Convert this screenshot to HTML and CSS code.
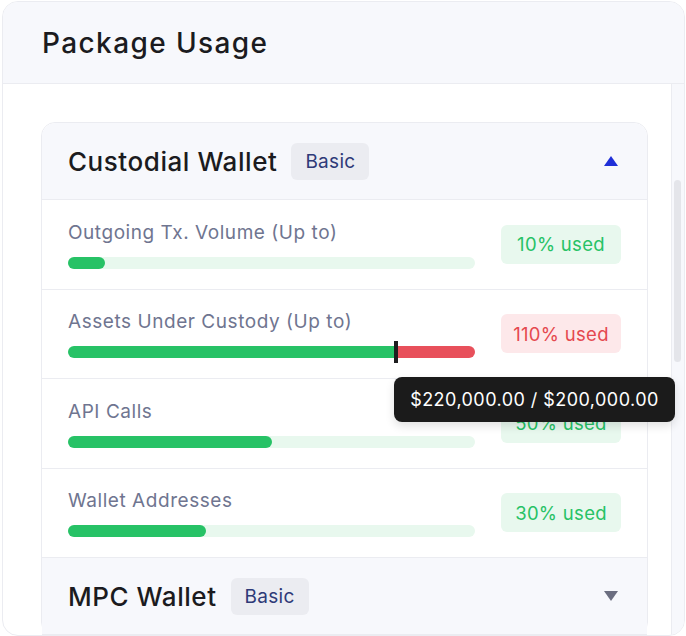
FILE: index.html
```html
<!DOCTYPE html>
<html lang="en">
<head>
<meta charset="utf-8">
<title>Package Usage</title>
<link rel="stylesheet" href="styles.css">
</head>
<body>
<div class="card">
  <div class="card-header">
    <h1 class="card-title">Package Usage</h1>
  </div>
  <div class="card-body">
    <div class="content">
      <div class="acc">
        <div class="acc-head">
          <span class="acc-title">Custodial Wallet</span>
          <span class="plan">Basic</span>
          <span class="caret caret-up"></span>
        </div>
        <div class="row">
          <div class="metric">
            <div class="label">Outgoing Tx. Volume (Up to)</div>
            <div class="bar"><div class="fill" style="width:9.1%"></div></div>
          </div>
          <span class="used">10% used</span>
        </div>
        <div class="row">
          <div class="metric">
            <div class="label">Assets Under Custody (Up to)</div>
            <div class="bar bar-over">
              <div class="fill fill-ok" style="width:326px"></div>
              <div class="marker"></div>
              <div class="fill-over"></div>
              <div class="tooltip">$220,000.00 / $200,000.00</div>
            </div>
          </div>
          <span class="used used-over">110% used</span>
        </div>
        <div class="row">
          <div class="metric">
            <div class="label">API Calls</div>
            <div class="bar"><div class="fill" style="width:50%"></div></div>
          </div>
          <span class="used">50% used</span>
        </div>
        <div class="row">
          <div class="metric">
            <div class="label">Wallet Addresses</div>
            <div class="bar"><div class="fill" style="width:33.8%"></div></div>
          </div>
          <span class="used">30% used</span>
        </div>
        <div class="acc-head acc-head-closed">
          <span class="acc-title">MPC Wallet</span>
          <span class="plan">Basic</span>
          <span class="caret caret-down"></span>
        </div>
      </div>
    </div>
    <div class="scroll-track"><div class="scroll-thumb"></div></div>
  </div>
</div>
</body>
</html>
```
FILE: styles.css
```css
* { box-sizing: border-box; }
html, body { margin: 0; padding: 0; background: #ffffff; }
body {
  width: 686px;
  height: 636px;
  overflow: hidden;
  font-family: Inter, "Noto Sans", "DejaVu Sans", sans-serif;
  color: #1b1b20;
}
.card {
  margin: 1px 1px 0 2px;
  height: 635px;
  border: 1px solid #ebecf1;
  border-radius: 16px;
  overflow: hidden;
  display: flex;
  flex-direction: column;
  background: #ffffff;
}
.card-header {
  height: 82px;
  flex: none;
  background: #f7f8fc;
  border-bottom: 1px solid #ebecf1;
  display: flex;
  align-items: center;
  padding-left: 39px;
}
.card-title {
  margin: 0;
  font-size: 28px;
  font-weight: 500;
  color: #1b1b20;
  letter-spacing: 1.4px;
}
.card-body {
  flex: 1;
  display: flex;
  min-height: 0;
}
.content {
  flex: 1;
  padding: 38px 23px 0 38px;
  position: relative;
}
.acc {
  border: 1px solid #ebecf1;
  border-radius: 14px;
  background: #ffffff;
}
.acc-head {
  height: 77px;
  background: #f7f8fc;
  border-bottom: 1px solid #ebecf1;
  border-radius: 14px 14px 0 0;
  display: flex;
  align-items: center;
  padding: 0 29px 0 26px;
}
.acc-head-closed { border-radius: 0; }
.acc-title {
  font-size: 26px;
  font-weight: 500;
  color: #1b1b20;
  letter-spacing: 0.55px;
}
.plan {
  margin-left: 14px;
  height: 37px;
  padding: 0 14px;
  display: inline-flex;
  align-items: center;
  background: #ebecf1;
  border-radius: 6px;
  color: #2e3a78;
  font-size: 19px;
  letter-spacing: 0.3px;
}
.caret {
  margin-left: auto;
  width: 0;
  height: 0;
  border-left: 7px solid transparent;
  border-right: 7px solid transparent;
}
.caret-up { border-bottom: 10px solid #1f2fd8; }
.caret-down { border-top: 10px solid #6b6e80; }
.row {
  height: 89.5px;
  border-bottom: 1px solid #ebecf1;
  display: flex;
  align-items: center;
  gap: 26px;
  padding: 0 26px;
}
.metric {
  flex: 1;
  padding-top: 2px;
}
.label {
  font-size: 19px;
  line-height: 22px;
  color: #6f7590;
  letter-spacing: 0.55px;
  margin-bottom: 13px;
}
.bar {
  position: relative;
  height: 12px;
  border-radius: 6px;
  background: #e8f8ee;
  display: flex;
}
.fill {
  height: 12px;
  border-radius: 6px;
  background: #27c266;
}
.bar-over { background: transparent; align-items: center; }
.fill-ok { border-radius: 6px 0 0 6px; }
.marker {
  width: 4px;
  height: 22px;
  background: #1d1d1f;
  flex: none;
}
.fill-over {
  flex: 1;
  height: 12px;
  background: #e8505b;
  border-radius: 0 6px 6px 0;
}
.tooltip {
  position: absolute;
  left: 326px;
  top: 31px;
  z-index: 5;
  width: 281px;
  height: 45px;
  border-radius: 8px;
  background: #1b1b1b;
  color: #ffffff;
  font-size: 18px;
  letter-spacing: 0.45px;
  display: flex;
  align-items: center;
  justify-content: center;
  white-space: nowrap;
  box-shadow: 0 4px 10px rgba(0, 0, 0, 0.12);
}
.used {
  flex: none;
  width: 120px;
  height: 39px;
  border-radius: 6px;
  background: #e8f8ee;
  color: #27c266;
  font-size: 18.5px;
  letter-spacing: 0.3px;
  display: flex;
  align-items: center;
  justify-content: center;
}
.used-over {
  background: #fde8ea;
  color: #e5484f;
}
.scroll-track {
  flex: none;
  width: 13px;
  border-left: 1px solid #ebecf1;
  background: #f7f8fc;
  padding: 96px 3px 0 2px;
}
.scroll-thumb {
  height: 182px;
  border-radius: 4px;
  background: #e4e5ea;
}
```
